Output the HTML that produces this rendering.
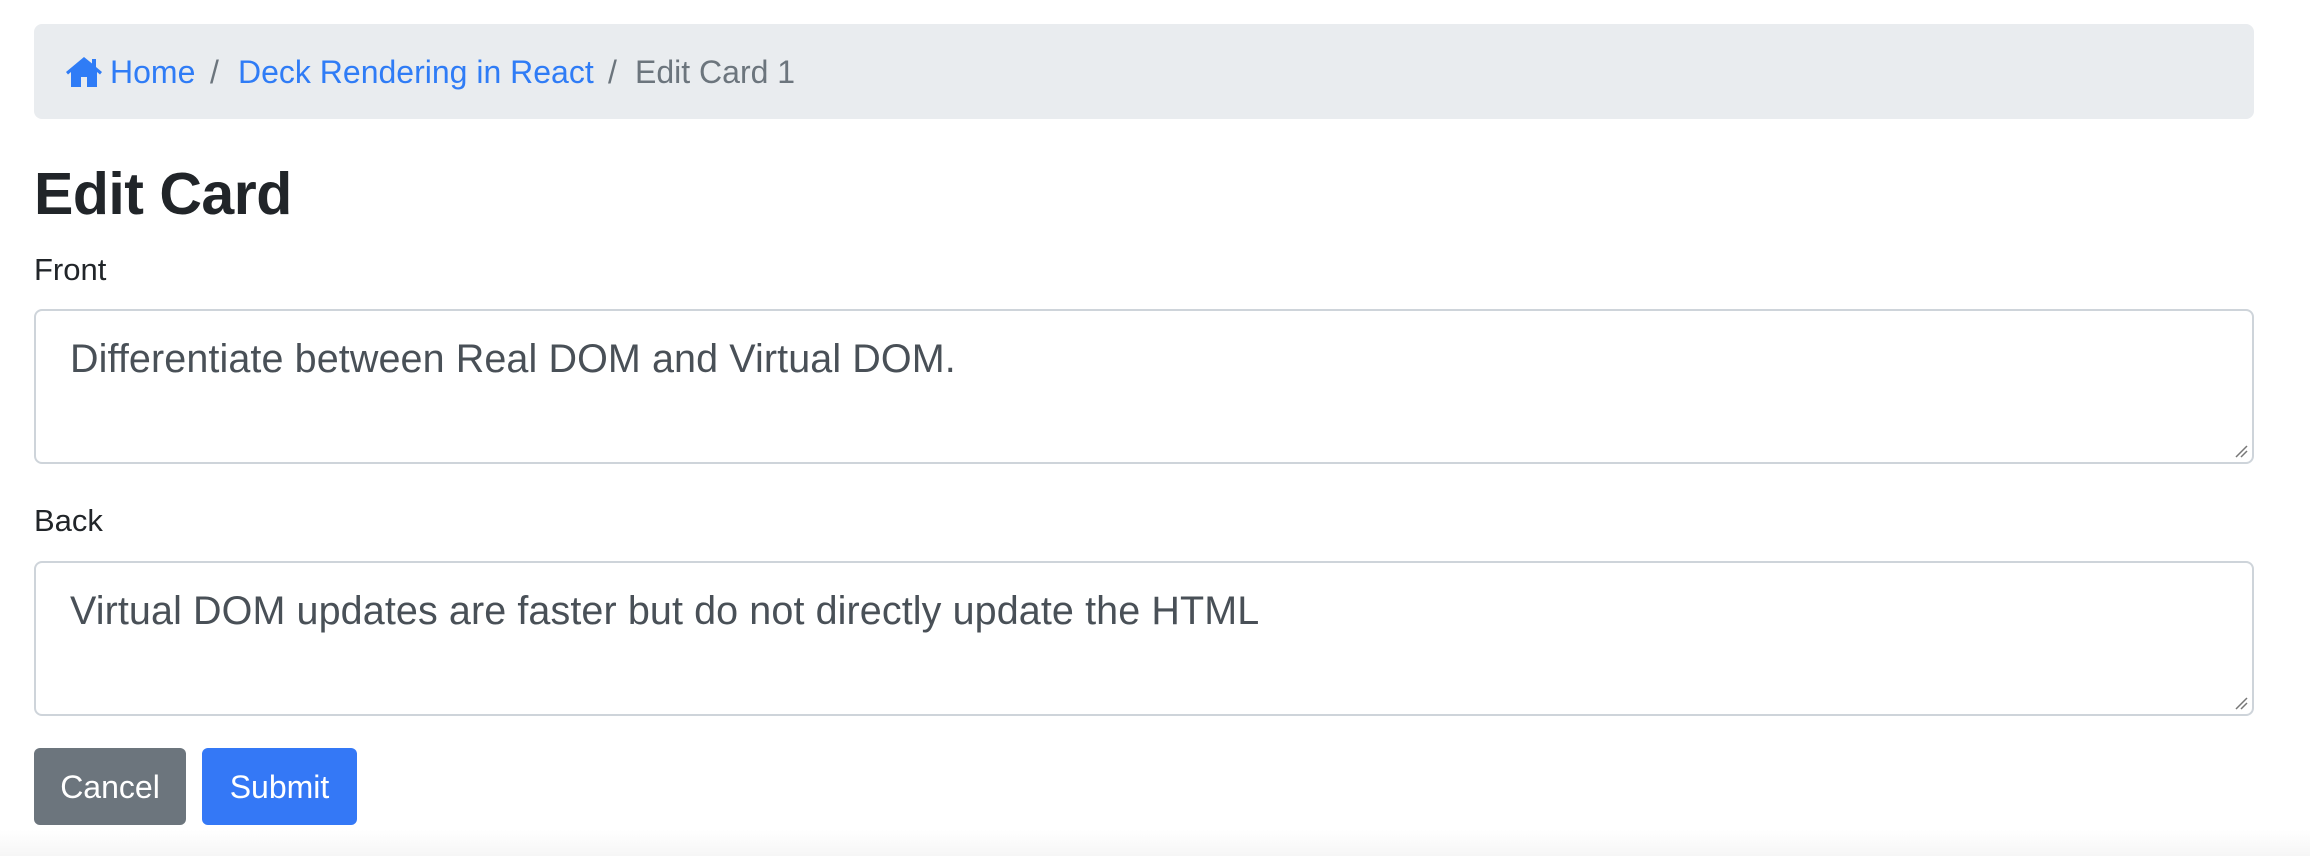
<!DOCTYPE html>
<html><head><meta charset="utf-8"><style>
html,body{margin:0;padding:0;background:#fff;width:2310px;height:856px;overflow:hidden;font-family:"Liberation Sans",Arial,sans-serif;color:#212529}
body{background:linear-gradient(#fff 0,#fff 830px,#f6f6f6 856px)}
.bc{position:absolute;left:34px;top:24px;width:2220px;height:95px;background:#e9ecef;border-radius:8px;font-size:32px;line-height:97px}
.bc span{position:absolute;top:0}
.a{color:#2f7cf6}.s{color:#6c757d}
h1{position:absolute;left:34px;top:154px;margin:0;font-size:59px;font-weight:bold;line-height:80px;letter-spacing:-0.5px}
.lab{position:absolute;left:34px;font-size:31px;line-height:40px}
.ta{position:absolute;left:34px;width:2216px;height:151px;border:2px solid #ced4da;border-radius:8px;background:#fff;box-sizing:content-box}
.ta div{position:absolute;left:34px;top:24px;font-size:39.5px;line-height:48px;color:#495057;letter-spacing:0.1px}
.grip{position:absolute;right:4px;bottom:4px;width:14px;height:14px}
.btn{position:absolute;top:748px;height:77px;border-radius:6px;color:#fff;font-size:32px;line-height:79px;text-align:center}
</style></head><body>
<div class="bc">
<svg style="position:absolute;left:32px;top:32px" width="36" height="32" viewBox="0 0 36 32"><path fill="#2f7cf6" d="M18 1 0 16l2 2.5 3-2.5V31h10V21h6v10h10V16l3 2.5 2-2.5-6-5V3h-4v4.5z"/></svg>
<span class="a" style="left:76px">Home</span>
<span class="s" style="left:176px">/</span>
<span class="a" style="left:204px">Deck Rendering in React</span>
<span class="s" style="left:574px">/</span>
<span class="s" style="left:601px">Edit Card 1</span>
</div>
<h1>Edit Card</h1>
<div class="lab" style="top:250px">Front</div>
<div class="ta" style="top:309px"><div>Differentiate between Real DOM and Virtual DOM.</div>
<svg class="grip" viewBox="0 0 14 14"><path d="M2 13 13 2M7 13 13 7" stroke="#777" stroke-width="1.5"/></svg></div>
<div class="lab" style="top:501px">Back</div>
<div class="ta" style="top:561px"><div>Virtual DOM updates are faster but do not directly update the HTML</div>
<svg class="grip" viewBox="0 0 14 14"><path d="M2 13 13 2M7 13 13 7" stroke="#777" stroke-width="1.5"/></svg></div>
<div class="btn" style="left:34px;width:152px;background:#6c757d">Cancel</div>
<div class="btn" style="left:202px;width:155px;background:#3478f6">Submit</div>
</body></html>
